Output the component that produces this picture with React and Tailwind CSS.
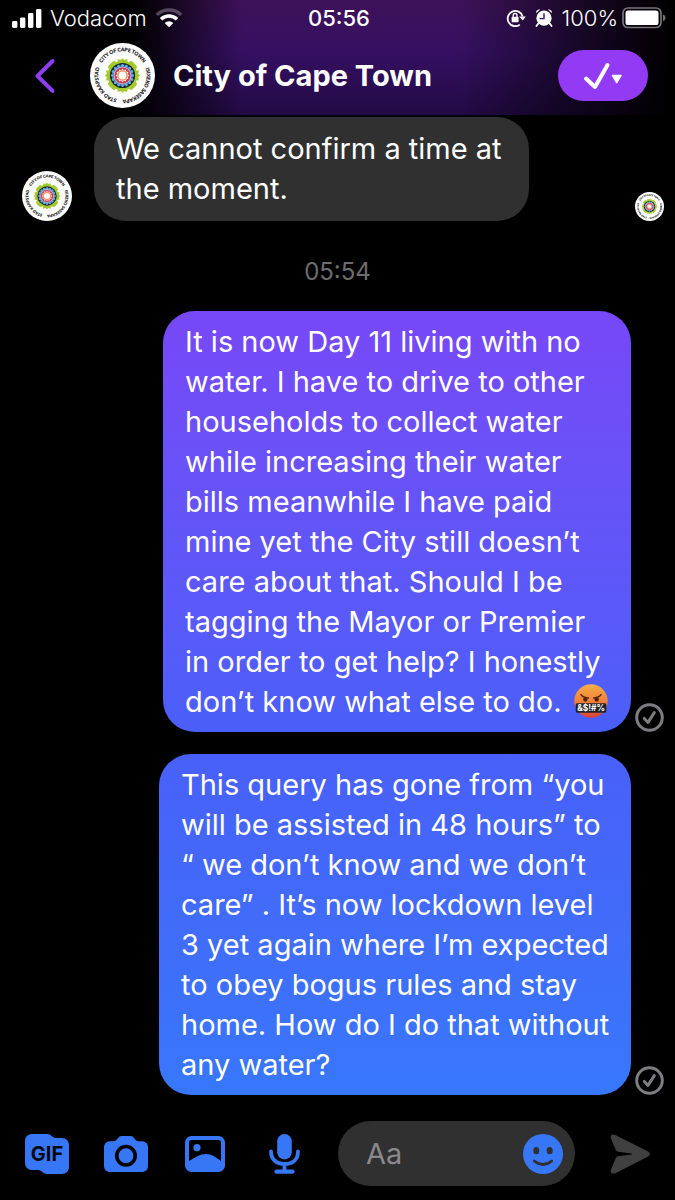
import React, { useId } from "react";

const GREEN_LOBES = [0, 45, 90, 135, 180, 225, 270, 315];
const BLUE_DOTS = Array.from({ length: 16 }, (_, i) => i * 22.5);
const RAYS = Array.from({ length: 12 }, (_, i) => i * 30);

function CityLogo({ className }) {
  const id = useId();
  return (
    <svg viewBox="0 0 196 196" className={className} role="img" aria-label="City of Cape Town">
      <circle cx="98" cy="98" r="98" fill="#fff" />
      <defs>
        <path id={`${id}a`} d="M98 171 A73 73 0 0 1 98 25 A73 73 0 0 1 98 171" />
        <path id={`${id}b`} d="M98 25 A73 73 0 0 1 98 171 A73 73 0 0 1 98 25" />
      </defs>
      <g fontFamily="Lato, 'Open Sans', sans-serif" fontWeight="700" fontSize="15" fill="#111" stroke="#111" strokeWidth=".5" textAnchor="middle">
        <text><textPath href={`#${id}a`} startOffset="50%">CITY OF CAPE TOWN</textPath></text>
        <text><textPath href={`#${id}b`} startOffset="35%">ISIXEKO SASEKAPA</textPath></text>
        <text><textPath href={`#${id}a`} startOffset="17%">STAD KAAPSTAD</textPath></text>
      </g>
      <g fill="#a4c92c">
        <circle cx="98" cy="98" r="44" />
        {GREEN_LOBES.map((a) => (
          <g key={a} transform={`rotate(${a} 98 98)`}>
            {a % 90 === 0 ? (
              <path d="M82 60 L84 48 L93 51 L98 45 L103 51 L112 48 L114 60Z" />
            ) : (
              <rect x="83" y="47" width="30" height="22" rx="9" />
            )}
          </g>
        ))}
      </g>
      <circle cx="98" cy="98" r="38" fill="#17242c" />
      <circle cx="98" cy="98" r="32" fill="#3d7fb4" />
      {BLUE_DOTS.map((a) => (
        <circle key={a} cx="98" cy="67" r="4" fill="#5fb2dc" transform={`rotate(${a} 98 98)`} />
      ))}
      <circle cx="98" cy="98" r="27" fill="#c9b4dc" />
      <circle cx="98" cy="98" r="24" fill="#d2344c" />
      <circle cx="98" cy="98" r="18" fill="#f5b09a" />
      {RAYS.map((a) => (
        <path key={a} d="M95 82 L98 77 L101 82Z" fill="#fff" transform={`rotate(${a} 98 98)`} />
      ))}
      <circle cx="98" cy="98" r="15" fill="#f0824a" />
      <circle cx="98" cy="98" r="12" fill="#fffdf6" />
    </svg>
  );
}

function SignalIcon() {
  return (
    <svg viewBox="0 0 30 19" className="h-[19px] w-[30px]" fill="#fff" aria-hidden="true">
      <rect x="0" y="12" width="5.4" height="7" rx="1.4" />
      <rect x="8" y="8.5" width="5.4" height="10.5" rx="1.4" />
      <rect x="16" y="4" width="5.4" height="15" rx="1.4" />
      <rect x="24" y="0" width="5.4" height="19" rx="1.4" />
    </svg>
  );
}

function WifiIcon() {
  return (
    <svg viewBox="0 0 28 20" className="h-5 w-7" fill="none" aria-hidden="true">
      <path d="M1.8 6.9 A17.5 17.5 0 0 1 26.2 6.9" stroke="#fff" strokeOpacity=".28" strokeWidth="3.4" />
      <path d="M6 11.3 A11.5 11.5 0 0 1 22 11.3" stroke="#fff" strokeWidth="3.4" />
      <path d="M14 19.3 L9.7 14.9 A6.2 6.2 0 0 1 18.3 14.9 Z" fill="#fff" />
    </svg>
  );
}

function RotationLockIcon() {
  return (
    <svg viewBox="0 0 20 20" className="h-5 w-5" fill="none" aria-hidden="true">
      <path d="M13.8 16.7 A7.6 7.6 0 1 1 16.6 8.4" stroke="#fff" strokeWidth="1.8" />
      <path d="M13 8.4 H19.8 L16.8 12.6Z" fill="#fff" />
      <rect x="5.6" y="8.8" width="7" height="5.4" rx=".8" fill="#fff" />
      <path d="M7.2 9 V7.4 A1.9 1.9 0 0 1 11 7.4 V9" stroke="#fff" strokeWidth="1.3" />
    </svg>
  );
}

function AlarmIcon() {
  return (
    <svg viewBox="0 0 20 20" className="h-5 w-5" fill="none" aria-hidden="true">
      <circle cx="10" cy="10.2" r="7.6" fill="#fff" />
      <path d="M2 5.2 A3.4 3.4 0 0 1 6.2 1.6Z M18 5.2 A3.4 3.4 0 0 0 13.8 1.6Z" fill="#fff" />
      <path d="M4.4 15.4 L2.4 18 M15.6 15.4 L17.6 18" stroke="#fff" strokeWidth="1.8" strokeLinecap="round" />
      <path d="M10 5.2 V10.6 H5.6" stroke="#3a1160" strokeWidth="1.4" />
    </svg>
  );
}

function BatteryIcon() {
  return (
    <svg viewBox="0 0 44 22" className="h-[22px] w-11" aria-hidden="true">
      <rect x="1" y="1" width="38" height="19.5" rx="5" fill="none" stroke="#fff" strokeOpacity=".45" strokeWidth="1.7" />
      <rect x="3.5" y="3.4" width="33" height="14.6" rx="2.6" fill="#fff" />
      <path d="M41 7.4 Q43.6 8.4 43.6 10.8 T41 14.2Z" fill="#fff" fillOpacity=".45" />
    </svg>
  );
}

function AngryEmoji() {
  const id = useId();
  return (
    <svg viewBox="0 0 102 102" className="ml-1 inline-block h-[34px] w-[34px] align-[-6px]" role="img" aria-label="Face with symbols on mouth">
      <defs>
        <linearGradient id={id} x1="0" y1="0" x2="0" y2="1">
          <stop offset="0" stopColor="#f7ae45" />
          <stop offset=".5" stopColor="#f0823a" />
          <stop offset="1" stopColor="#dd3f36" />
        </linearGradient>
      </defs>
      <circle cx="51" cy="51" r="50" fill={`url(#${id})`} />
      <ellipse cx="34" cy="46" rx="6.5" ry="7.5" fill="#55240e" />
      <ellipse cx="68" cy="46" rx="6.5" ry="7.5" fill="#55240e" />
      <path d="M21 32 Q27 41 43 42 M81 32 Q75 41 59 42" stroke="#55240e" strokeWidth="4.5" strokeLinecap="round" fill="none" />
      <rect x="5" y="58" width="92" height="28" rx="5" fill="#222326" />
      <text x="51" y="81" textAnchor="middle" fontFamily="Inter, sans-serif" fontWeight="700" fontSize="25" fill="#fff">&amp;$!#%</text>
    </svg>
  );
}

function SentIcon() {
  return (
    <svg viewBox="0 0 29 29" className="h-[29px] w-[29px] shrink-0" fill="none" role="img" aria-label="Sent">
      <circle cx="14.5" cy="14.5" r="12.8" stroke="#7e7e82" strokeWidth="3" />
      <path d="M9.3 15.4 L13 19.4 L19.3 9.6" stroke="#7e7e82" strokeWidth="3" strokeLinecap="round" strokeLinejoin="round" />
    </svg>
  );
}

function GifIcon() {
  return (
    <svg viewBox="0 0 44 40" className="h-10 w-11" aria-hidden="true">
      <path d="M7 0 H21 C25 0 26 1.5 28 3 C29 3.7 30 4 32 4 H37 C41 4 44 7 44 11 V33 C44 37 41 40 37 40 H23 C19 40 18 38.5 16 37 C15 36.3 14 36 12 36 H7 C3 36 0 33 0 29 V7 C0 3 3 0 7 0Z" fill="#3777f6" />
      <text x="22" y="27" textAnchor="middle" fontFamily="Inter, sans-serif" fontWeight="700" fontSize="20" fill="#05070c">GIF</text>
    </svg>
  );
}

function CameraIcon() {
  return (
    <svg viewBox="0 0 44 40" className="h-10 w-11" aria-hidden="true">
      <path d="M17.5 2 H26.5 C30.5 2 30.5 7.3 34.5 7.3 H37.5 C41.5 7.3 44 9.8 44 13.5 V32 C44 35.7 41.5 38 37.5 38 H6.5 C2.5 38 0 35.7 0 32 V13.5 C0 9.8 2.5 7.3 6.5 7.3 H9.5 C13.5 7.3 13.5 2 17.5 2Z" fill="#3777f6" />
      <circle cx="22" cy="21.7" r="9.2" fill="#3777f6" stroke="#000" strokeWidth="3.6" />
    </svg>
  );
}

function PictureIcon() {
  return (
    <svg viewBox="0 0 44 40" className="h-10 w-11" aria-hidden="true">
      <rect x="2" y="2" width="40" height="36" rx="6.5" fill="#3777f6" />
      <path d="M8.5 6 H35.5 Q38 6 38 8.5 V27 C33 23.5 29 20 23 20 C17 20 12 23.5 6 27 V8.5 Q6 6 8.5 6Z" fill="#000" />
      <circle cx="14" cy="13.7" r="3.6" fill="#3777f6" />
    </svg>
  );
}

function MicIcon() {
  return (
    <svg viewBox="0 0 44 40" className="h-10 w-11" fill="none" aria-hidden="true">
      <rect x="15.2" y="0" width="14.6" height="25.5" rx="7.3" fill="#3777f6" />
      <path d="M9 17.5 C9 25.5 14.5 30 22.5 30 S36 25.5 36 17.5 M22.5 30 V37" stroke="#3777f6" strokeWidth="3.8" strokeLinecap="round" />
      <path d="M14.5 37.7 H30.5" stroke="#3777f6" strokeWidth="4.2" strokeLinecap="round" />
    </svg>
  );
}

function SmileIcon() {
  return (
    <svg viewBox="0 0 40 40" className="h-10 w-10" aria-hidden="true">
      <circle cx="20" cy="20" r="20" fill="#3777f6" />
      <ellipse cx="13.3" cy="16.7" rx="3" ry="3.6" fill="#303030" />
      <ellipse cx="26.7" cy="16.7" rx="3" ry="3.6" fill="#303030" />
      <path d="M11.3 27 Q20 34 28.7 27" stroke="#303030" strokeWidth="2.8" strokeLinecap="round" fill="none" />
    </svg>
  );
}

function SendIcon() {
  return (
    <svg viewBox="0 0 40 40" className="h-10 w-10" aria-hidden="true">
      <path d="M5.3 .9 L38.2 17.6 Q41.5 20 38.2 22.4 L5.3 39.2 Q.2 41 .8 36.3 L5.9 23.8 Q6.6 22.5 8.2 22.3 L21.5 20.4 Q22.5 20 21.5 19.6 L8.2 17.7 Q6.6 17.5 5.9 16.2 L.8 4 Q.2 -1 5.3 .9Z" fill="#404040" />
    </svg>
  );
}

function Lines({ lines, children }) {
  return (
    <p className="text-[29px] leading-10 whitespace-nowrap text-white">
      {lines.map((line, i) => (
        <span key={line} className="block">
          {line}
          {i === lines.length - 1 ? children : " "}
        </span>
      ))}
    </p>
  );
}

export default function App() {
  return (
    <div className="flex min-h-screen flex-col bg-black font-['Inter','Noto_Sans',sans-serif] text-white">
      <header className="bg-[linear-gradient(90deg,#000_20%,transparent_36%,transparent_68%,#000_99%),linear-gradient(180deg,#3e1259_0%,#351062_45%,#220a44_100%)]">
        <div className="grid h-9 grid-cols-[1fr_auto_1fr] items-center pr-[9px] pl-3 text-[22px] font-light">
          <div className="flex items-center gap-2">
            <SignalIcon />
            <span>Vodacom</span>
            <WifiIcon />
          </div>
          <time className="font-medium">05:56</time>
          <div className="flex items-center justify-end">
            <RotationLockIcon />
            <span className="ml-2"><AlarmIcon /></span>
            <span className="ml-2">100%</span>
            <span className="ml-1"><BatteryIcon /></span>
          </div>
        </div>
        <div className="flex h-[79px] items-center pr-[27px] pl-[34px]">
          <button type="button" aria-label="Back" className="shrink-0">
            <svg viewBox="0 0 22 36" className="h-9 w-[22px]" fill="none" aria-hidden="true">
              <path d="M18.5 3 L3.500 18 L18.5 32.8" stroke="#8f3df3" strokeWidth="4" strokeLinecap="round" strokeLinejoin="round" />
            </svg>
          </button>
          <CityLogo className="ml-[34px] h-[65px] w-[65px] shrink-0" />
          <h1 className="ml-[18px] flex-1 text-[29px] font-bold whitespace-nowrap">City of Cape Town</h1>
          <button type="button" aria-label="Mark as done" className="flex h-[51px] w-[90px] items-center justify-center rounded-full bg-[#933af4]">
            <svg viewBox="0 0 40 28" className="h-7 w-10" fill="none" aria-hidden="true">
              <path d="M3 16.5 L12 25 L24.5 3" stroke="#fff" strokeWidth="4" strokeLinecap="round" strokeLinejoin="round" />
              <path d="M29.5 13.5 H38 L33.7 20.5Z" fill="#fff" stroke="#fff" strokeWidth="1.5" strokeLinejoin="round" />
            </svg>
          </button>
        </div>
      </header>

      <main className="flex flex-1 flex-col pt-[2px] pr-[11px] pl-[22px]">
        <div className="flex items-end">
          <CityLogo className="h-[50px] w-[50px]" />
          <div className="ml-[22px] w-[435px] rounded-[32px] bg-[#303030] px-[22px] py-3">
            <Lines lines={["We cannot confirm a time at", "the moment."]} />
          </div>
          <CityLogo className="ml-auto h-[29px] w-[29px]" />
        </div>

        <time className="mr-[11px] flex h-[90px] items-center justify-center self-center pt-3 text-2xl text-[#6d6d6d]">05:54</time>

        <div className="flex items-end justify-end gap-1">
          <div className="w-[468px] rounded-[32px] bg-linear-to-b from-[#7748f7] to-[#4a5ff9] px-[22px] pt-[11px] pb-[10px]">
            <Lines
              lines={[
                "It is now Day 11 living with no",
                "water. I have to drive to other",
                "households to collect water",
                "while increasing their water",
                "bills meanwhile I have paid",
                "mine yet the City still doesn’t",
                "care about that. Should I be",
                "tagging the Mayor or Premier",
                "in order to get help? I honestly",
                "don’t know what else to do.",
              ]}
            >
              {" "}
              <AngryEmoji />
            </Lines>
          </div>
          <SentIcon />
        </div>

        <div className="mt-[22px] flex items-end justify-end gap-1">
          <div className="w-[472px] rounded-[32px] bg-linear-to-b from-[#4860f9] to-[#3777fa] px-[22px] pt-[11px] pb-[10px]">
            <Lines
              lines={[
                "This query has gone from “you",
                "will be assisted in 48 hours” to",
                "“ we don’t know and we don’t",
                "care” . It’s now lockdown level",
                "3 yet again where I’m expected",
                "to obey bogus rules and stay",
                "home. How do I do that without",
                "any water?",
              ]}
            />
          </div>
          <SentIcon />
        </div>
      </main>

      <footer className="flex items-center gap-[35px] pt-[26px] pr-[25px] pb-[14px] pl-[25px]">
        <button type="button" aria-label="GIF"><GifIcon /></button>
        <button type="button" aria-label="Camera"><CameraIcon /></button>
        <button type="button" aria-label="Gallery"><PictureIcon /></button>
        <button type="button" aria-label="Voice message"><MicIcon /></button>
        <div className="-ml-[3px] flex h-[65px] min-w-0 flex-1 items-center rounded-full bg-[#303030] pr-3 pl-7">
          <input type="text" aria-label="Message" placeholder="Aa" className="min-w-0 flex-1 bg-transparent text-[29px] leading-10 outline-none placeholder:text-[#8a8a8e]" />
          <button type="button" aria-label="Emoji"><SmileIcon /></button>
        </div>
        <button type="button" aria-label="Send"><SendIcon /></button>
      </footer>
    </div>
  );
}
